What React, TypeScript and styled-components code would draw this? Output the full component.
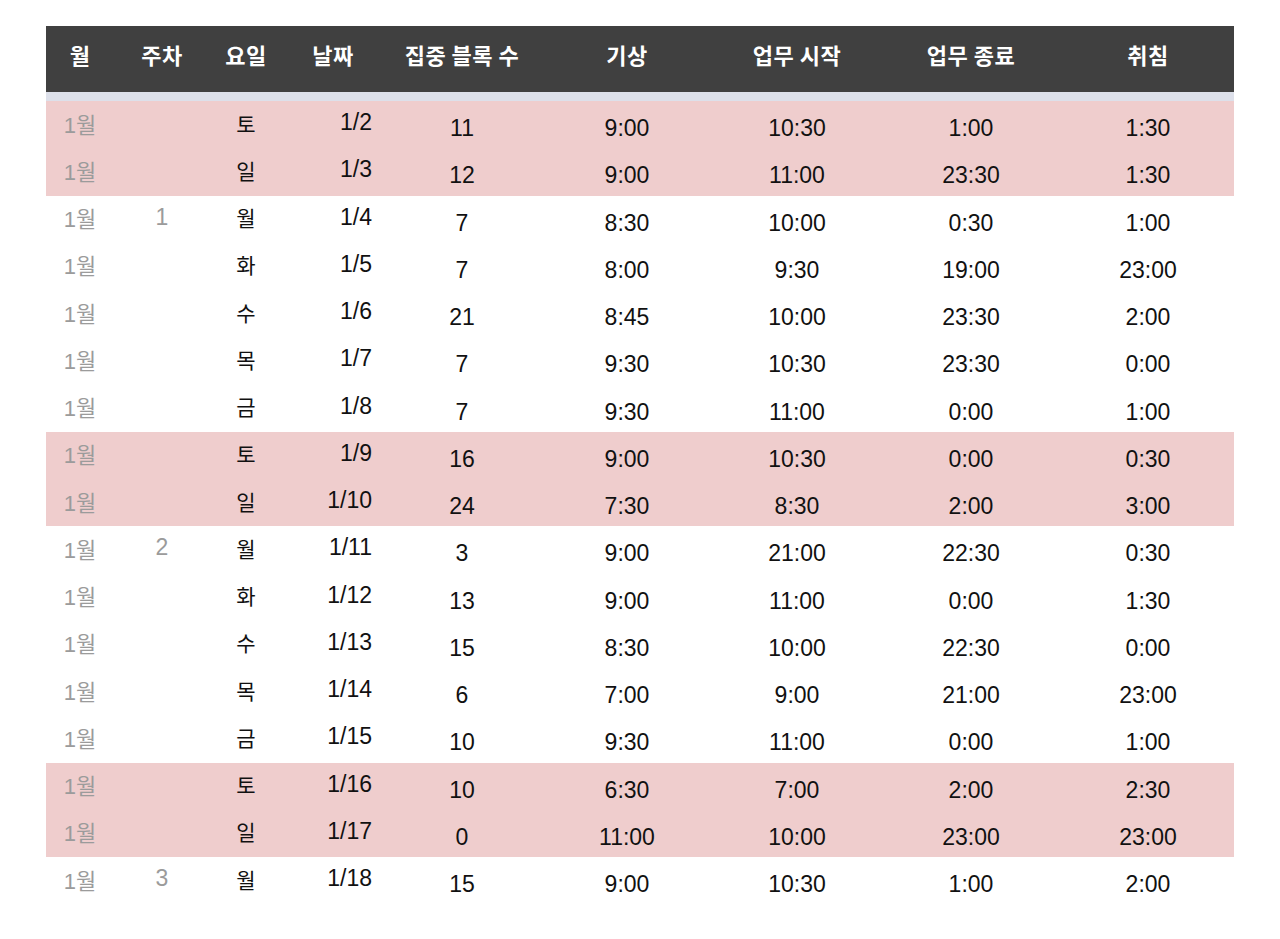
import React from 'react';
import styled, { createGlobalStyle } from 'styled-components';

interface DayRow {
  week: string;
  day: string;
  date: string;
  blocks: string;
  wake: string;
  start: string;
  end: string;
  sleep: string;
}

const rows: DayRow[] = [
  { week: '', day: '토', date: '1/2', blocks: '11', wake: '9:00', start: '10:30', end: '1:00', sleep: '1:30' },
  { week: '', day: '일', date: '1/3', blocks: '12', wake: '9:00', start: '11:00', end: '23:30', sleep: '1:30' },
  { week: '1', day: '월', date: '1/4', blocks: '7', wake: '8:30', start: '10:00', end: '0:30', sleep: '1:00' },
  { week: '', day: '화', date: '1/5', blocks: '7', wake: '8:00', start: '9:30', end: '19:00', sleep: '23:00' },
  { week: '', day: '수', date: '1/6', blocks: '21', wake: '8:45', start: '10:00', end: '23:30', sleep: '2:00' },
  { week: '', day: '목', date: '1/7', blocks: '7', wake: '9:30', start: '10:30', end: '23:30', sleep: '0:00' },
  { week: '', day: '금', date: '1/8', blocks: '7', wake: '9:30', start: '11:00', end: '0:00', sleep: '1:00' },
  { week: '', day: '토', date: '1/9', blocks: '16', wake: '9:00', start: '10:30', end: '0:00', sleep: '0:30' },
  { week: '', day: '일', date: '1/10', blocks: '24', wake: '7:30', start: '8:30', end: '2:00', sleep: '3:00' },
  { week: '2', day: '월', date: '1/11', blocks: '3', wake: '9:00', start: '21:00', end: '22:30', sleep: '0:30' },
  { week: '', day: '화', date: '1/12', blocks: '13', wake: '9:00', start: '11:00', end: '0:00', sleep: '1:30' },
  { week: '', day: '수', date: '1/13', blocks: '15', wake: '8:30', start: '10:00', end: '22:30', sleep: '0:00' },
  { week: '', day: '목', date: '1/14', blocks: '6', wake: '7:00', start: '9:00', end: '21:00', sleep: '23:00' },
  { week: '', day: '금', date: '1/15', blocks: '10', wake: '9:30', start: '11:00', end: '0:00', sleep: '1:00' },
  { week: '', day: '토', date: '1/16', blocks: '10', wake: '6:30', start: '7:00', end: '2:00', sleep: '2:30' },
  { week: '', day: '일', date: '1/17', blocks: '0', wake: '11:00', start: '10:00', end: '23:00', sleep: '23:00' },
  { week: '3', day: '월', date: '1/18', blocks: '15', wake: '9:00', start: '10:30', end: '1:00', sleep: '2:00' },
];

const headers = ['월', '주차', '요일', '날짜', '집중 블록 수', '기상', '업무 시작', '업무 종료', '취침'];

const COLUMNS = '68px 96px 72px 102px 156px 174px 166px 182px 172px';

const GlobalStyle = createGlobalStyle`
  body {
    margin: 0;
    background: #ffffff;
    font-family: "Liberation Sans", "Noto Sans CJK KR", sans-serif;
  }
`;

const Page = styled.div`
  padding: 26px 46px 0 46px;
  width: 1188px;
`;

const HeaderRow = styled.div`
  display: grid;
  grid-template-columns: ${COLUMNS};
  height: 66px;
  background: #404040;
  border-bottom: 9px solid #dde0ea;
`;

const HeaderCell = styled.div`
  display: flex;
  align-items: center;
  justify-content: center;
  padding-bottom: 10px;
  color: #ffffff;
  font-family: "Noto Sans CJK KR", sans-serif;
  font-weight: 700;
  font-size: 22px;
  letter-spacing: 0.5px;
  white-space: nowrap;
`;

const Row = styled.div<{ $weekend: boolean }>`
  display: grid;
  grid-template-columns: ${COLUMNS};
  height: 47.25px;
  background: ${({ $weekend }) => ($weekend ? '#efcdcd' : '#ffffff')};
`;

const Cell = styled.div<{ $muted?: boolean; $right?: boolean; $low?: boolean; $size?: number }>`
  display: flex;
  align-items: center;
  justify-content: ${({ $right }) => ($right ? 'flex-end' : 'center')};
  padding-right: ${({ $right }) => ($right ? '12px' : '0')};
  padding-top: ${({ $low }) => ($low ? '8px' : '0')};
  padding-bottom: ${({ $low }) => ($low ? '0' : '4px')};
  font-size: ${({ $size }) => $size ?? 23}px;
  color: ${({ $muted }) => ($muted ? '#9b9b9b' : '#111111')};
`;

const App: React.FC = () => {
  return (
    <Page>
      <GlobalStyle />
      <HeaderRow>
        {headers.map((h) => (
          <HeaderCell key={h}>{h}</HeaderCell>
        ))}
      </HeaderRow>
      {rows.map((r) => (
        <Row key={r.date} $weekend={r.day === '토' || r.day === '일'}>
          <Cell $muted $size={22}>1월</Cell>
          <Cell $muted>{r.week}</Cell>
          <Cell $size={21}>{r.day}</Cell>
          <Cell $right>{r.date}</Cell>
          <Cell $low>{r.blocks}</Cell>
          <Cell $low>{r.wake}</Cell>
          <Cell $low>{r.start}</Cell>
          <Cell $low>{r.end}</Cell>
          <Cell $low>{r.sleep}</Cell>
        </Row>
      ))}
    </Page>
  );
};

export default App;
